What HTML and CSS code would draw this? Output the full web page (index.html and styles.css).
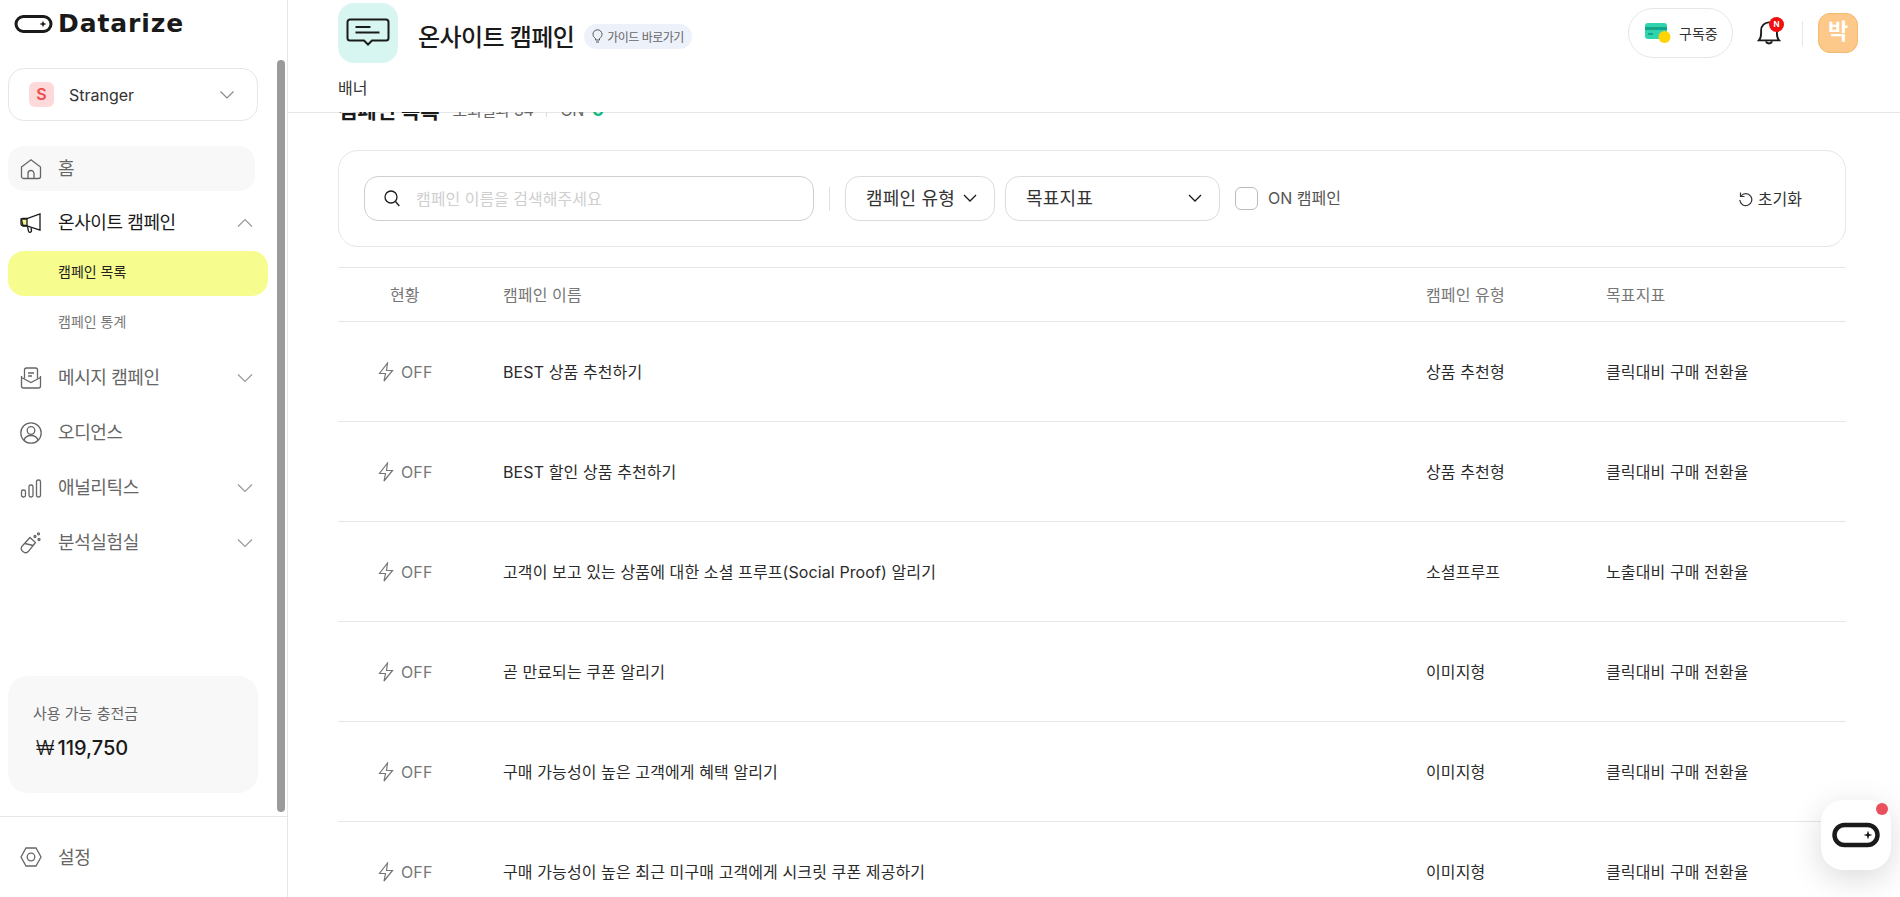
FILE: index.html
```html
<!DOCTYPE html>
<html lang="ko">
<head>
  <meta charset="UTF-8" />
  <meta name="viewport" content="width=device-width, initial-scale=1.0"/>
  <title>Datarize</title>
  <link rel="stylesheet" href="styles.css">
</head>
<body>
<div class="app">

  <!-- Sidebar -->
  <aside class="sidebar">
    <div class="side-scroll">
      <div class="logo">
        <svg class="logo-mark" width="40" height="20" viewBox="0 0 40 20"><rect x="2" y="2.500" width="35" height="15" rx="7.500" fill="none" stroke="#1a1a1a" stroke-width="3"/><path d="M29 6.500l.9 2.600 2.600.9-2.600.9-.9 2.600-.9-2.600-2.600-.9 2.600-.9z" fill="#1a1a1a"/></svg>
        <span class="logo-text">Datarize</span>
      </div>

      <div class="account">
        <span class="account-badge">S</span>
        <span class="account-name">Stranger</span>
        <svg class="chev" width="16" height="10" viewBox="0 0 16 10"><path d="M1.500 1.500L8 8l6.500-6.500" fill="none" stroke="#8a8a8a" stroke-width="1.200"/></svg>
      </div>

      <nav class="nav">
        <div class="nav-item nav-home">
          <svg class="nav-icon" width="22" height="22" viewBox="0 0 22 22" fill="none" stroke="#666" stroke-width="1.300"><path d="M1.500 9L11 1.800 20.500 9v9.500a2 2 0 0 1-2 2h-15a2 2 0 0 1-2-2z"/><path d="M8 20.500v-5a3 3 0 0 1 6 0v5"/></svg>
          <span>홈</span>
        </div>
        <div class="nav-item nav-open">
          <svg class="nav-icon" width="22" height="22" viewBox="0 0 22 22" fill="none" stroke="#1a1a1a" stroke-width="1.300"><path d="M20 2v16L7 14H3a2 2 0 0 1-2-2V8.500a2 2 0 0 1 2-2h4z"/><path d="M1.200 7h5.800v6.500H3z" fill="#f3f78f"/><path d="M7.500 14.500l1 4.500a1.500 1.500 0 0 0 3-.5l-.5-2.500"/></svg>
          <span>온사이트 캠페인</span>
          <svg class="nav-chev" width="16" height="10" viewBox="0 0 16 10"><path d="M1 8.500L8 1.500l7 7" fill="none" stroke="#999" stroke-width="1.200"/></svg>
        </div>
        <div class="sub-item sub-active">캠페인 목록</div>
        <div class="sub-item">캠페인 통계</div>
        <div class="nav-item nav-after-sub">
          <svg class="nav-icon" width="22" height="22" viewBox="0 0 22 22" fill="none" stroke="#666" stroke-width="1.300"><path d="M1.500 9v10a2 2 0 0 0 2 2h15a2 2 0 0 0 2-2V9"/><path d="M1.500 10.500l9.500 5 9.500-5"/><path d="M4.500 11.500V3a2 2 0 0 1 2-2h9a2 2 0 0 1 2 2v8.500"/><path d="M8 6h6M8 9h4"/></svg>
          <span>메시지 캠페인</span>
          <svg class="nav-chev" width="16" height="10" viewBox="0 0 16 10"><path d="M1 1.500L8 8.500l7-7" fill="none" stroke="#999" stroke-width="1.200"/></svg>
        </div>
        <div class="nav-item">
          <svg class="nav-icon" width="22" height="22" viewBox="0 0 22 22" fill="none" stroke="#666" stroke-width="1.300"><circle cx="11" cy="11" r="10.200"/><circle cx="11" cy="8.500" r="3.800"/><path d="M4 18.500c.8-3.400 3.500-5 7-5s6.200 1.600 7 5"/></svg>
          <span>오디언스</span>
        </div>
        <div class="nav-item">
          <svg class="nav-icon" width="22" height="22" viewBox="0 0 22 22" fill="none" stroke="#666" stroke-width="1.300"><rect x="1.500" y="13" width="4" height="7" rx="1.800"/><rect x="9" y="8" width="4" height="12" rx="1.800"/><rect x="16.500" y="3" width="4" height="17" rx="1.800"/></svg>
          <span>애널리틱스</span>
          <svg class="nav-chev" width="16" height="10" viewBox="0 0 16 10"><path d="M1 1.500L8 8.500l7-7" fill="none" stroke="#999" stroke-width="1.200"/></svg>
        </div>
        <div class="nav-item">
          <svg class="nav-icon" width="22" height="22" viewBox="0 0 22 22" fill="none" stroke="#666" stroke-width="1.300"><path d="M1.800 14.500L10 5.500l5.500 5-7 8.800a3.800 3.800 0 0 1-5.200.4 3.900 3.900 0 0 1-1.500-5.200z"/><path d="M5 11.500l8 2"/><circle cx="15" cy="4.500" r="1"/><circle cx="19" cy="7.500" r="1"/><circle cx="18.500" cy="1.800" r="1"/></svg>
          <span>분석실험실</span>
          <svg class="nav-chev" width="16" height="10" viewBox="0 0 16 10"><path d="M1 1.500L8 8.500l7-7" fill="none" stroke="#999" stroke-width="1.200"/></svg>
        </div>
      </nav>

      <div class="credit">
        <div class="credit-label">사용 가능 충전금</div>
        <div class="credit-value"><span class="won">₩</span>119,750</div>
      </div>
      <div class="side-thumb"></div>
    </div>

    <div class="side-foot">
      <svg class="nav-icon" width="22" height="20" viewBox="0 0 22 20" fill="none" stroke="#666" stroke-width="1.300"><path d="M6 1h10l5 9-5 9H6l-5-9z"/><circle cx="11" cy="10" r="3.800"/></svg>
      <span>설정</span>
    </div>
  </aside>

  <!-- Main -->
  <main class="main">
    <header class="header">
      <div class="header-left">
        <div class="header-title">
          <div class="title-icon">
            <svg width="44" height="30" viewBox="0 0 44 30" fill="none" stroke="#1a1a1a" stroke-width="2"><path d="M4 1.500h36a2.500 2.500 0 0 1 2.500 2.500v16a2.500 2.500 0 0 1-2.500 2.500H26l-4 4-4-4H4A2.500 2.500 0 0 1 1.500 20V4A2.500 2.500 0 0 1 4 1.500z"/><path d="M9.500 9h15M9.500 14.500h24"/></svg>
          </div>
          <h1>온사이트 캠페인</h1>
          <span class="guide">
            <svg width="11" height="14" viewBox="0 0 11 14" fill="none" stroke="#555" stroke-width="1"><path d="M3.500 9.500C2 8.500 1 7 1 5.300a4.500 4.500 0 0 1 9 0c0 1.700-1 3.200-2.500 4.200v1.500h-4z"/><path d="M4 13h3"/></svg>
            가이드 바로가기
          </span>
        </div>
        <div class="tab">배너</div>
      </div>
      <div class="header-right">
        <div class="subscribe">
          <svg width="26" height="24" viewBox="0 0 26 24"><rect x="0" y="2" width="22" height="16" rx="3" fill="#2fd3ae"/><rect x="0" y="6" width="22" height="3" fill="#14a487"/><rect x="3" y="12" width="5" height="2" fill="#14a487"/><circle cx="19.500" cy="16" r="6" fill="#ffd400"/></svg>
          <span>구독중</span>
        </div>
        <div class="bell">
          <svg width="24" height="26" viewBox="0 0 24 28" fill="none" stroke="#1a1a1a" stroke-width="2"><path d="M1 22c2-2 2.500-4 2.500-8V11a8.500 8.500 0 0 1 17 0v3c0 4 .5 6 2.500 8z"/><path d="M9 23c0 3 6 3 6 0"/></svg>
          <span class="bell-badge">N</span>
        </div>
        <span class="header-sep"></span>
        <div class="avatar">박</div>
      </div>
    </header>

    <div class="content">
      <div class="page-head">
        <h2>캠페인 목록</h2>
        <span class="page-count">조회결과 34</span>
        <span class="page-sep"></span>
        <span class="page-count">ON <b>0</b></span>
      </div>

      <div class="filters">
        <div class="search">
          <svg width="16" height="17" viewBox="0 0 16 17" fill="none" stroke="#1a1a1a" stroke-width="1.300"><circle cx="7" cy="7" r="6"/><path d="M11.500 11.500l3.800 4.500"/></svg>
          <span>캠페인 이름을 검색해주세요</span>
        </div>
        <span class="filter-sep"></span>
        <div class="select select-type">
          <span>캠페인 유형</span>
          <svg width="14" height="9" viewBox="0 0 14 9"><path d="M1 1l6 6 6-6" fill="none" stroke="#1a1a1a" stroke-width="1.300"/></svg>
        </div>
        <div class="select select-goal">
          <span>목표지표</span>
          <svg width="14" height="9" viewBox="0 0 14 9"><path d="M1 1l6 6 6-6" fill="none" stroke="#1a1a1a" stroke-width="1.300"/></svg>
        </div>
        <label class="check"><span class="check-box"></span><span>ON 캠페인</span></label>
        <div class="reset">
          <svg width="15" height="16" viewBox="0 0 15 16" fill="none" stroke="#333" stroke-width="1.200"><path d="M3 5a6 6 0 1 1-1.200 4"/><path d="M2.500 1.500V5.500h4"/></svg>
          <span>초기화</span>
        </div>
      </div>

      <table class="campaigns">
        <thead>
          <tr><th class="col-status">현황</th><th class="col-name">캠페인 이름</th><th class="col-type">캠페인 유형</th><th class="col-goal">목표지표</th></tr>
        </thead>
        <tbody id="rows"></tbody>
      </table>
    </div>

    <div class="chat">
      <svg width="48" height="26" viewBox="0 0 48 26"><rect x="2.500" y="3" width="43" height="20" rx="10" fill="none" stroke="#1a1a1a" stroke-width="4.500"/><path d="M36 8.500l1.100 3.400 3.400 1.100-3.400 1.100-1.100 3.400-1.100-3.400-3.400-1.100 3.400-1.100z" fill="#1a1a1a"/></svg>
      <span class="chat-dot"></span>
    </div>
  </main>
</div>

<script>
  const campaigns = [
    ["BEST 상품 추천하기", "상품 추천형", "클릭대비 구매 전환율"],
    ["BEST 할인 상품 추천하기", "상품 추천형", "클릭대비 구매 전환율"],
    ["고객이 보고 있는 상품에 대한 소셜 프루프(Social Proof) 알리기", "소셜프루프", "노출대비 구매 전환율"],
    ["곧 만료되는 쿠폰 알리기", "이미지형", "클릭대비 구매 전환율"],
    ["구매 가능성이 높은 고객에게 혜택 알리기", "이미지형", "클릭대비 구매 전환율"],
    ["구매 가능성이 높은 최근 미구매 고객에게 시크릿 쿠폰 제공하기", "이미지형", "클릭대비 구매 전환율"]
  ];

  const bolt = '<svg width="16" height="20" viewBox="0 0 16 20" fill="none" stroke="#777" stroke-width="1.200"><path d="M9.500 1L1.500 11.500h6l-1.500 7.500 8.500-10.500h-6z"/></svg>';

  document.getElementById("rows").innerHTML = campaigns.map(c =>
    `<tr><td class="col-status"><span class="status">${bolt}OFF</span></td><td class="col-name">${c[0]}</td><td class="col-type">${c[1]}</td><td class="col-goal">${c[2]}</td></tr>`
  ).join("");
</script>
</body>
</html>
```

FILE: styles.css
```css
* {
  box-sizing: border-box;
}

html, body {
  height: 100%;
}

body {
  margin: 0;
  overflow: hidden;
  background-color: #fff;
  color: #1a1a1a;
  font-family: Inter, 'Noto Sans CJK KR', sans-serif;
}

.app {
  display: flex;
  height: 100vh;
}

/* Sidebar */
.sidebar {
  position: relative;
  width: 288px;
  flex-shrink: 0;
  display: flex;
  flex-direction: column;
  border-right: 1px solid #e6e6e6;
}

.side-scroll {
  flex: 1;
  padding: 0 8px;
  display: flex;
  flex-direction: column;
}

.side-thumb {
  position: absolute;
  left: 277px;
  top: 60px;
  width: 8px;
  height: 752px;
  border-radius: 4px;
  background-color: #9b9b9b;
}

.logo {
  display: flex;
  align-items: center;
  gap: 4px;
  height: 24px;
  margin: 12px 0 0 6px;
}

.logo-text {
  font-family: 'DejaVu Sans', sans-serif;
  font-size: 25px;
  font-weight: 700;
  letter-spacing: 0.9px;
  line-height: 24px;
}

.account {
  display: flex;
  align-items: center;
  width: 250px;
  height: 53px;
  margin-top: 32px;
  padding: 0 22px 0 20px;
  border: 1px solid #e6e6e6;
  border-radius: 16px;
}

.account-badge {
  width: 25px;
  height: 25px;
  border-radius: 6px;
  background-color: #fdd9d9;
  color: #ee4c4c;
  font-size: 16px;
  font-weight: 600;
  text-align: center;
  line-height: 25px;
}

.account-name {
  flex: 1;
  margin-left: 15px;
  font-size: 16px;
  color: #333;
}

.nav {
  margin-top: 25px;
}

.nav-item {
  display: flex;
  align-items: center;
  width: 247px;
  height: 45px;
  margin-bottom: 10px;
  padding: 0 2px 0 12px;
  border-radius: 16px;
  font-size: 18px;
  letter-spacing: -0.4px;
  color: #666;
}

.nav-item span {
  flex: 1;
  margin-left: 16px;
  padding-bottom: 3px;
}

.nav-home {
  background-color: #f8f8f8;
  margin-bottom: 9px;
}

.nav-open {
  margin-bottom: 6px;
  color: #1a1a1a;
}

.sub-item {
  width: 260px;
  height: 45px;
  margin-bottom: 5px;
  padding-left: 50px;
  border-radius: 16px;
  font-size: 14px;
  line-height: 42px;
  color: #777;
}

.sub-active {
  background-color: #f6fd8e;
  color: #222;
}

.nav-after-sub {
  margin-top: 9px;
}

.credit {
  width: 250px;
  height: 117px;
  margin-top: 101px;
  padding: 26px 25px;
  border-radius: 20px;
  background-color: #f8f8f8;
}

.credit-label {
  font-size: 15px;
  color: #666;
}

.credit-value {
  display: flex;
  align-items: center;
  gap: 3px;
  margin-top: 13px;
  padding-left: 3px;
  font-size: 20px;
  font-weight: 500;
}

.won {
  font-weight: 300;
}

.side-foot {
  display: flex;
  align-items: center;
  gap: 16px;
  height: 81px;
  padding: 0 20px;
  border-top: 1px solid #e6e6e6;
  font-size: 18px;
  letter-spacing: -0.4px;
  color: #666;
}

.side-foot span {
  padding-bottom: 3px;
}

/* Main */
.main {
  position: relative;
  flex: 1;
  min-width: 0;
  overflow: hidden;
}

.header {
  position: relative;
  z-index: 2;
  display: flex;
  justify-content: space-between;
  height: 112px;
  padding: 3px 42px 0 50px;
  background-color: #fff;
}

.header-title {
  display: flex;
  align-items: center;
}

.title-icon {
  display: flex;
  align-items: center;
  justify-content: center;
  width: 60px;
  height: 60px;
  border-radius: 16px;
  background-color: #d8f6f1;
}

.header h1 {
  margin: 4px 0 0 20px;
  font-size: 24px;
  font-weight: 500;
  letter-spacing: -0.6px;
}

.guide {
  display: flex;
  align-items: center;
  gap: 4px;
  height: 25px;
  margin: 6px 0 0 10px;
  padding: 0 8px;
  border-radius: 13px;
  background-color: #edf1fa;
  font-size: 12px;
  letter-spacing: -0.5px;
  color: #666;
}

.tab {
  margin-top: 12px;
  font-size: 16px;
  color: #333;
}

.header-right {
  display: flex;
  align-items: center;
  height: 60px;
}

.subscribe {
  display: flex;
  align-items: center;
  gap: 8px;
  width: 105px;
  height: 50px;
  padding-left: 16px;
  border: 1px solid #e6e6e6;
  border-radius: 25px;
  font-size: 14px;
  color: #333;
}

.bell {
  position: relative;
  width: 24px;
  height: 26px;
  margin-left: 24px;
}

.bell-badge {
  position: absolute;
  top: -3px;
  right: -3px;
  width: 15px;
  height: 15px;
  border-radius: 50%;
  background-color: #f01010;
  color: #fff;
  font-size: 8px;
  font-weight: 700;
  text-align: center;
  line-height: 15px;
}

.header-sep {
  width: 1px;
  height: 25px;
  margin: 0 15px 0 21px;
  background-color: #e6e6e6;
}

.avatar {
  width: 40px;
  height: 40px;
  border-radius: 12px;
  border: 1px solid #f3b96c;
  background-color: #fdc98a;
  color: #fff;
  font-size: 22px;
  font-weight: 700;
  text-align: center;
  line-height: 34px;
}

.content {
  padding: 0 54px 0 50px;
  border-top: 1px solid #e6e6e6;
}

.page-head {
  display: flex;
  align-items: center;
  gap: 13px;
  height: 22px;
  margin: -15px 0 30px;
}

.page-head h2 {
  margin: 0;
  font-size: 21px;
  font-weight: 700;
}

.page-count {
  font-size: 16px;
  letter-spacing: -0.4px;
  color: #666;
}

.page-count b {
  margin-left: 4px;
  color: #12b886;
  font-size: 18px;
}

.page-sep {
  width: 1px;
  height: 16px;
  background-color: #ddd;
}

.filters {
  display: flex;
  align-items: center;
  height: 97px;
  padding: 0 25px;
  border: 1px solid #e6e6e6;
  border-radius: 20px;
}

.search {
  display: flex;
  align-items: center;
  gap: 16px;
  width: 450px;
  height: 45px;
  padding-left: 19px;
  border: 1px solid #cfcfcf;
  border-radius: 14px;
  font-size: 16px;
  color: #cfcfcf;
}

.search span {
  padding-bottom: 2px;
}

.filter-sep {
  width: 1px;
  height: 24px;
  margin: 0 15px;
  background-color: #e2e2e2;
}

.select {
  display: flex;
  align-items: center;
  justify-content: space-between;
  height: 45px;
  padding: 0 17px 0 20px;
  border: 1px solid #dcdcdc;
  border-radius: 14px;
  font-size: 18px;
  color: #333;
}

.select span {
  padding-bottom: 3px;
  letter-spacing: 0.2px;
}

.select-type {
  width: 150px;
}

.select-goal {
  width: 215px;
  margin-left: 10px;
}

.check {
  display: flex;
  align-items: center;
  gap: 10px;
  margin-left: 15px;
  font-size: 16px;
  color: #555;
}

.check span:last-child {
  padding-bottom: 3px;
}

.check-box {
  width: 23px;
  height: 23px;
  border: 1px solid #bbb;
  border-radius: 6px;
}

.reset {
  display: flex;
  align-items: center;
  gap: 5px;
  margin-left: auto;
  margin-right: 18px;
  font-size: 16px;
  color: #333;
}

.reset span {
  padding-bottom: 2px;
}

.campaigns {
  width: 100%;
  margin-top: 20px;
  border-collapse: collapse;
  table-layout: fixed;
  font-size: 16px;
  letter-spacing: 0.1px;
}

.campaigns th {
  height: 54px;
  padding: 0 0 2px 1px;
  border-top: 1px solid #e6e6e6;
  border-bottom: 1px solid #e6e6e6;
  font-size: 16px;
  font-weight: 400;
  color: #777;
  text-align: left;
}

.campaigns td {
  height: 100px;
  padding: 0 0 2px 1px;
  border-bottom: 1px solid #e6e6e6;
  color: #2b2b2b;
}

.campaigns td.col-status {
  width: 164px;
  padding: 0 0 0 40px;
}

.campaigns th.col-status {
  width: 164px;
  padding-left: 52px;
}

.col-type {
  width: 180px;
}

.col-goal {
  width: 241px;
}

.status {
  display: flex;
  align-items: center;
  gap: 7px;
  color: #777;
  font-size: 16px;
}

.chat {
  position: absolute;
  top: 800px;
  right: 9px;
  width: 70px;
  height: 70px;
  display: flex;
  align-items: center;
  justify-content: center;
  border-radius: 22px;
  background-color: #fff;
  box-shadow: 0 8px 32px rgba(0, 0, 0, 0.15);
}

.chat-dot {
  position: absolute;
  top: 3px;
  right: 3px;
  width: 12px;
  height: 12px;
  border-radius: 50%;
  background-color: #e9505c;
}
```
